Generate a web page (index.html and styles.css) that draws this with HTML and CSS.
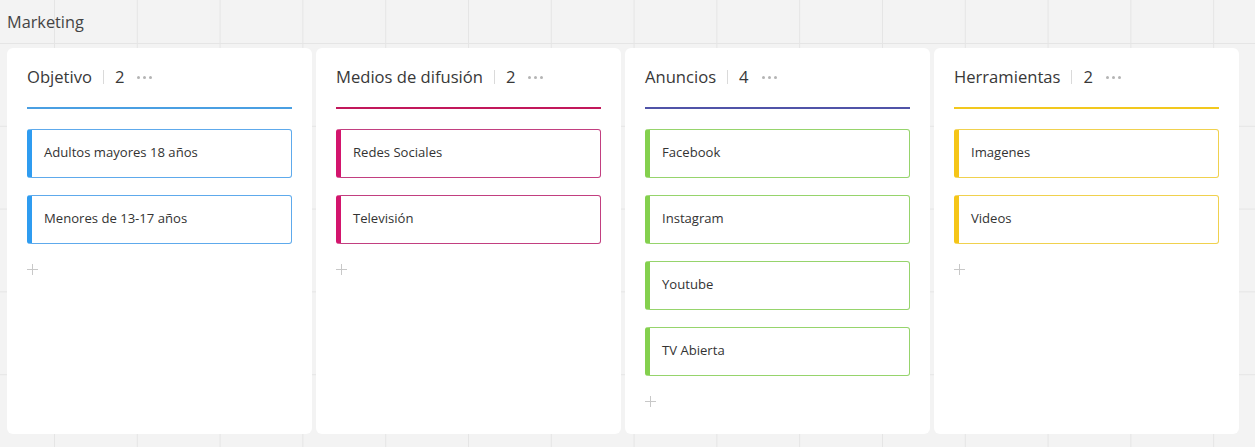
FILE: index.html
```html
<!DOCTYPE html>
<html lang="es">
<head>
<meta charset="utf-8">
<title>Marketing</title>
<link rel="stylesheet" href="styles.css">
</head>
<body>
<div class="page">
  <h1 class="title">Marketing</h1>
  <div class="board">
    <section class="column blue">
      <header class="col-head">
        <span class="col-name">Objetivo</span>
        <span class="sep"></span>
        <span class="count">2</span>
        <span class="dots"><i></i><i></i><i></i></span>
      </header>
      <div class="cards">
        <div class="card">Adultos mayores 18 años</div>
        <div class="card">Menores de 13-17 años</div>
      </div>
      <div class="add"></div>
    </section>
    <section class="column pink">
      <header class="col-head">
        <span class="col-name">Medios de difusión</span>
        <span class="sep"></span>
        <span class="count">2</span>
        <span class="dots"><i></i><i></i><i></i></span>
      </header>
      <div class="cards">
        <div class="card">Redes Sociales</div>
        <div class="card">Televisión</div>
      </div>
      <div class="add"></div>
    </section>
    <section class="column indigo">
      <header class="col-head">
        <span class="col-name">Anuncios</span>
        <span class="sep"></span>
        <span class="count">4</span>
        <span class="dots"><i></i><i></i><i></i></span>
      </header>
      <div class="cards green">
        <div class="card">Facebook</div>
        <div class="card">Instagram</div>
        <div class="card">Youtube</div>
        <div class="card">TV Abierta</div>
      </div>
      <div class="add"></div>
    </section>
    <section class="column yellow">
      <header class="col-head">
        <span class="col-name">Herramientas</span>
        <span class="sep"></span>
        <span class="count">2</span>
        <span class="dots"><i></i><i></i><i></i></span>
      </header>
      <div class="cards">
        <div class="card">Imagenes</div>
        <div class="card">Videos</div>
      </div>
      <div class="add"></div>
    </section>
  </div>
</div>
</body>
</html>
```

FILE: styles.css
```css
* { box-sizing: border-box; }
html, body { margin: 0; padding: 0; }
body {
  width: 1255px;
  height: 447px;
  overflow: hidden;
  font-family: "Open Sans", "Noto Sans", sans-serif;
  color: #333;
  background-color: #f3f3f3;
  background-image:
    linear-gradient(to right, #e5e5e5 1px, transparent 1px),
    linear-gradient(to bottom, #e5e5e5 1px, transparent 1px);
  background-size: 82.8px 82.8px;
  background-position: 54px 43px;
}
.page { padding: 0 0 0 7px; }
.title {
  margin: 0;
  height: 48px;
  padding-top: 11px;
  font-size: 16.3px;
  font-weight: 400;
  line-height: 22px;
  color: #444;
}
.board {
  display: flex;
  gap: 4px;
}
.column {
  width: 305px;
  height: 386px;
  background: #fff;
  border-radius: 6px;
  padding: 0 20px;
}
.col-head {
  display: flex;
  align-items: center;
  height: 61px;
  padding-top: 6px;
  padding-bottom: 7px;
  border-bottom: 2px solid var(--line);
  margin-bottom: 20px;
}
.col-name {
  font-size: 16.6px;
  line-height: 22px;
  color: #383838;
}
.sep {
  width: 1px;
  height: 14px;
  background: #dadada;
  margin: 0 11px;
}
.count {
  font-size: 16.6px;
  line-height: 22px;
  color: #383838;
}
.dots {
  display: flex;
  gap: 3px;
  margin-left: 13px;
}
.dots i {
  width: 3px;
  height: 3px;
  border-radius: 50%;
  background: #b4b4b4;
}
.cards {
  display: flex;
  flex-direction: column;
  gap: 17px;
}
.card {
  height: 49px;
  border-width: 1px 1px 1px 5px;
  border-style: solid;
  border-color: var(--cardline) var(--cardline) var(--cardline) var(--accent);
  border-radius: 3px;
  padding-left: 12px;
  padding-bottom: 4px;
  display: flex;
  align-items: center;
  font-size: 13.1px;
  color: #333;
}
.add {
  position: relative;
  width: 12px;
  height: 12px;
  margin: 20px 0 0 0;
}
.add::before, .add::after {
  content: "";
  position: absolute;
  background: #c8c8c8;
}
.add::before { left: 0; top: 5px; width: 11px; height: 1px; }
.add::after { left: 5px; top: 0; width: 1px; height: 11px; }

.blue { --line: #4a9fe2; --accent: #2f9cf0; --cardline: #5eaaec; }
.pink { --line: #c2185b; --accent: #d3156d; --cardline: #c23f80; }
.indigo { --line: #5053a8; }
.green { --accent: #84d04e; --cardline: #96d46c; }
.yellow { --line: #f2c81e; --accent: #f5c518; --cardline: #f0d14e; }
```
